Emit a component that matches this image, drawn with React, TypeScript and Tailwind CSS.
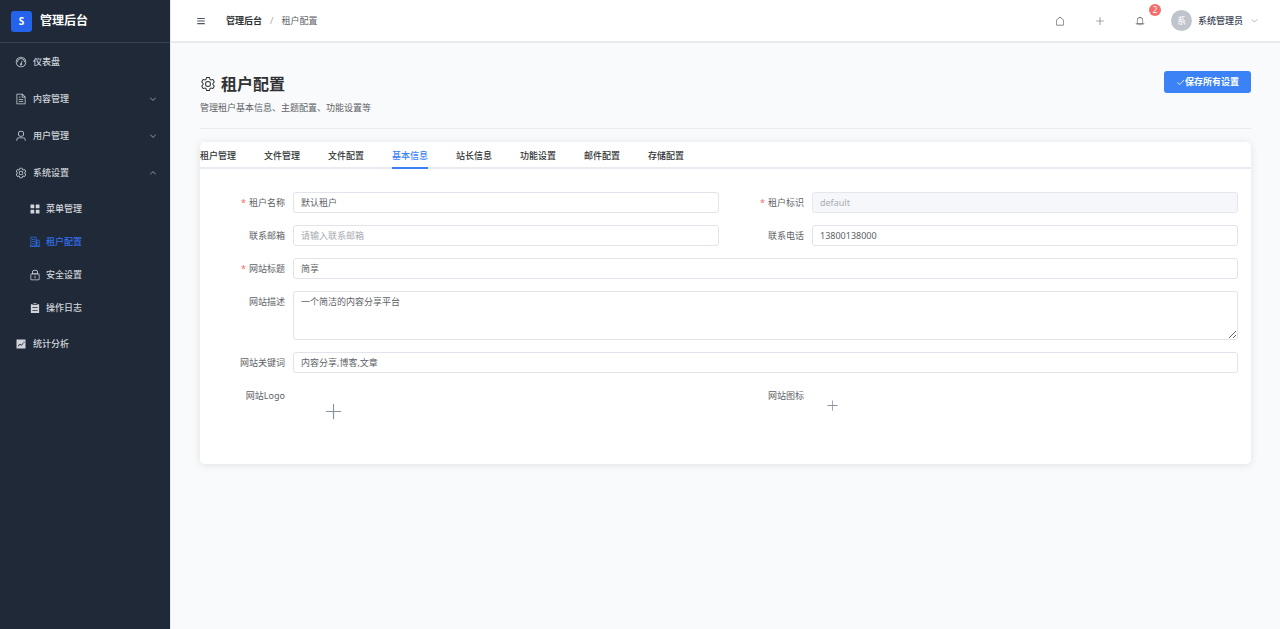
import { useState } from "react"
import type { ReactNode } from "react"
import clsx from "clsx"

const icons = {
  odometer:
    "M512 896a384 384 0 1 0 0-768 384 384 0 0 0 0 768zm0 64a448 448 0 1 1 0-896 448 448 0 0 1 0 896z M192 512a320 320 0 1 1 640 0 32 32 0 1 1-64 0 256 256 0 1 0-512 0 32 32 0 0 1-64 0z M570.432 627.84A96 96 0 1 1 509.568 608l60.992-187.776A32 32 0 1 1 631.424 440l-60.992 187.776zM502.08 734.464a32 32 0 1 0 19.84-60.928 32 32 0 0 0-19.84 60.928z",
  document:
    "M832 384H576V128H192v768h640V384zm-26.496-64L640 154.496V320h165.504zM160 64h480l256 256v608a32 32 0 0 1-32 32H160a32 32 0 0 1-32-32V96a32 32 0 0 1 32-32zm160 448h384v64H320v-64zm0-192h160v64H320v-64zm0 384h384v64H320v-64z",
  user: "M512 512a192 192 0 1 0 0-384 192 192 0 0 0 0 384zm0 64a256 256 0 1 1 0-512 256 256 0 0 1 0 512zm320 320v-96a96 96 0 0 0-96-96H288a96 96 0 0 0-96 96v96a32 32 0 1 1-64 0v-96a160 160 0 0 1 160-160h448a160 160 0 0 1 160 160v96a32 32 0 1 1-64 0z",
  setting:
    "M600.704 64a32 32 0 0 1 30.464 22.208l35.2 109.376c14.784 7.232 28.928 15.36 42.432 24.512l112.384-24.192a32 32 0 0 1 34.432 15.36L944.32 364.8a32 32 0 0 1-4.032 37.504l-77.12 85.12a357.12 357.12 0 0 1 0 49.024l77.12 85.248a32 32 0 0 1 4.032 37.504l-88.704 153.6a32 32 0 0 1-34.432 15.296L708.8 803.904c-13.44 9.088-27.648 17.28-42.368 24.512l-35.264 109.376A32 32 0 0 1 600.704 960H423.296a32 32 0 0 1-30.464-22.208L357.696 828.48a351.616 351.616 0 0 1-42.56-24.64l-112.32 24.256a32 32 0 0 1-34.432-15.36L79.68 659.2a32 32 0 0 1 4.032-37.504l77.12-85.248a357.12 357.12 0 0 1 0-48.896l-77.12-85.248A32 32 0 0 1 79.68 364.8l88.704-153.6a32 32 0 0 1 34.432-15.296l112.32 24.256c13.568-9.152 27.776-17.408 42.56-24.64l35.2-109.312A32 32 0 0 1 423.232 64H600.64zm-23.424 64H446.72l-36.352 113.088-24.512 11.968a294.113 294.113 0 0 0-34.816 20.096l-22.656 15.36-116.224-25.088-65.28 113.152 79.68 88.192-1.92 27.136a293.12 293.12 0 0 0 0 40.192l1.92 27.136-79.808 88.192 65.344 113.152 116.224-25.024 22.656 15.296a294.113 294.113 0 0 0 34.816 20.096l24.512 11.968L446.72 896h130.688l36.48-113.152 24.448-11.904a288.282 288.282 0 0 0 34.752-20.096l22.592-15.296 116.288 25.024 65.28-113.152-79.744-88.192 1.92-27.136a293.12 293.12 0 0 0 0-40.256l-1.92-27.136 79.808-88.128-65.344-113.152-116.288 24.96-22.592-15.232a287.616 287.616 0 0 0-34.752-20.096l-24.448-11.904L577.344 128zM512 320a192 192 0 1 1 0 384 192 192 0 0 1 0-384zm0 64a128 128 0 1 0 0 256 128 128 0 0 0 0-256z",
  menu: "M160 448a32 32 0 0 1-32-32V160.064a32 32 0 0 1 32-32h256a32 32 0 0 1 32 32V416a32 32 0 0 1-32 32H160zm448 0a32 32 0 0 1-32-32V160.064a32 32 0 0 1 32-32h255.936a32 32 0 0 1 32 32V416a32 32 0 0 1-32 32H608zM160 896a32 32 0 0 1-32-32V608a32 32 0 0 1 32-32h256a32 32 0 0 1 32 32v256a32 32 0 0 1-32 32H160zm448 0a32 32 0 0 1-32-32V608a32 32 0 0 1 32-32h255.936a32 32 0 0 1 32 32v256a32 32 0 0 1-32 32H608z",
  building:
    "M192 128v704h384V128H192zm-32-64h448a32 32 0 0 1 32 32v768a32 32 0 0 1-32 32H160a32 32 0 0 1-32-32V96a32 32 0 0 1 32-32z M256 256h256v64H256v-64zm0 192h256v64H256v-64zm0 192h256v64H256v-64zm384-128h128v64H640v-64zm0 128h128v64H640v-64zM64 832h896v64H64v-64z M640 384v448h192V384H640zm-32-64h256a32 32 0 0 1 32 32v512a32 32 0 0 1-32 32H608a32 32 0 0 1-32-32V352a32 32 0 0 1 32-32z",
  lock: "M224 448a32 32 0 0 0-32 32v384a32 32 0 0 0 32 32h576a32 32 0 0 0 32-32V480a32 32 0 0 0-32-32H224zm0-64h576a96 96 0 0 1 96 96v384a96 96 0 0 1-96 96H224a96 96 0 0 1-96-96V480a96 96 0 0 1 96-96z M512 544a32 32 0 0 1 32 32v192a32 32 0 1 1-64 0V576a32 32 0 0 1 32-32zm192-160v-64a192 192 0 1 0-384 0v64h384zM512 64a256 256 0 0 1 256 256v128H256V320A256 256 0 0 1 512 64z",
  list: "M704 192h160v736H160V192h160v64h384v-64zM288 512h448v-64H288v64zm0 256h448v-64H288v64zm96-576V96h256v96H384z",
  trend:
    "M128 896V128h768v768H128zm291.712-327.296 128 102.4 180.16-201.792-47.744-42.624-139.84 156.608-128-102.4-180.16 201.792 47.744 42.624 139.84-156.608zM816 352a48 48 0 1 0-96 0 48 48 0 0 0 96 0z",
  arrowDown:
    "M831.872 340.864 512 652.672 192.128 340.864a30.592 30.592 0 0 0-42.752 0 29.12 29.12 0 0 0 0 41.6L489.664 714.24a32 32 0 0 0 44.672 0l340.288-331.712a29.12 29.12 0 0 0 0-41.728 30.592 30.592 0 0 0-42.752 0z",
  fold: "M896 192H128v110h768V192zm0 265H128v110h768V457zm0 265H128v110h768V722z",
  house:
    "M192 413.952V896h640V413.952L512 147.328 192 413.952zM139.52 374.4l352-293.312a32 32 0 0 1 40.96 0l352 293.312A32 32 0 0 1 896 398.976V928a32 32 0 0 1-32 32H160a32 32 0 0 1-32-32V398.976a32 32 0 0 1 11.52-24.576z",
  plus: "M480 480V128a32 32 0 0 1 64 0v352h352a32 32 0 1 1 0 64H544v352a32 32 0 1 1-64 0V544H128a32 32 0 0 1 0-64h352z",
  bell: "M512 64a64 64 0 0 1 64 64v64H448v-64a64 64 0 0 1 64-64z M256 768h512V448a256 256 0 1 0-512 0v320zm256-640a320 320 0 0 1 320 320v384H192V448a320 320 0 0 1 320-320z M96 768h832q32 0 32 32t-32 32H96q-32 0-32-32t32-32zm352 128h128a64 64 0 0 1-128 0z",
  check:
    "M406.656 706.944 195.84 496.256a32 32 0 1 0-45.248 45.248l256 256 512-512a32 32 0 0 0-45.248-45.248L406.592 706.944z",
}

type IconName = keyof typeof icons

function Icon({ name, className }: { name: IconName; className?: string }) {
  return (
    <svg
      viewBox="0 0 1024 1024"
      fill="currentColor"
      aria-hidden="true"
      className={clsx("shrink-0", className)}
    >
      {icons[name].split(" M").map((d, i) => (
        <path key={i} d={i === 0 ? d : "M" + d} />
      ))}
    </svg>
  )
}

type MenuItem = { label: string; icon: IconName; children?: MenuItem[]; open?: boolean }

const menu: MenuItem[] = [
  { label: "仪表盘", icon: "odometer" },
  { label: "内容管理", icon: "document", children: [] },
  { label: "用户管理", icon: "user", children: [] },
  {
    label: "系统设置",
    icon: "setting",
    open: true,
    children: [
      { label: "菜单管理", icon: "menu" },
      { label: "租户配置", icon: "building" },
      { label: "安全设置", icon: "lock" },
      { label: "操作日志", icon: "list" },
    ],
  },
  { label: "统计分析", icon: "trend" },
]

const tabs = [
  "租户管理",
  "文件管理",
  "文件配置",
  "基本信息",
  "站长信息",
  "功能设置",
  "邮件配置",
  "存储配置",
]

function Sidebar() {
  return (
    <aside className="flex w-[171px] shrink-0 flex-col border-r border-[#e6e8eb] bg-[#1f2937] text-[#d1d5db]">
      <div className="flex h-[43px] items-center gap-2 border-b border-[#374151] pl-[11px] text-white">
        <span className="flex size-[21px] items-center justify-center rounded-[3px] bg-[#2563eb] text-[10px] font-bold">
          S
        </span>
        <span className="text-[12px] font-bold">管理后台</span>
      </div>
      <nav className="font-medium">
        {menu.map((item) => (
          <div key={item.label}>
            {item.children ? (
              <button
                type="button"
                aria-expanded={!!item.open}
                className="flex h-[37px] w-full items-center gap-[6px] pr-[13px] pl-[15px]"
              >
                <Icon name={item.icon} className="size-3" />
                <span>{item.label}</span>
                <Icon
                  name="arrowDown"
                  className={clsx("ml-auto size-2", item.open && "rotate-180")}
                />
              </button>
            ) : (
              <a href="#" className="flex h-[37px] items-center gap-[6px] pl-[15px]">
                <Icon name={item.icon} className="size-3" />
                <span>{item.label}</span>
              </a>
            )}
            {item.open && (
              <div className="py-px">
                {item.children?.map((child) => (
                  <a
                    key={child.label}
                    href="#"
                    className={clsx(
                      "flex h-[33px] items-center gap-[5px] pl-[29px]",
                      child.label === "租户配置" && "text-[#3370f0]"
                    )}
                  >
                    <Icon name={child.icon} className="size-3" />
                    <span>{child.label}</span>
                  </a>
                ))}
              </div>
            )}
          </div>
        ))}
      </nav>
    </aside>
  )
}

function Header() {
  return (
    <header className="z-10 flex h-[42px] shrink-0 items-center border-b border-[#e9ebee] bg-white pr-[21px] pl-[25px] shadow-[0_1px_1px_rgba(0,0,0,0.06)]">
      <button type="button" aria-label="折叠菜单" className="text-[#4b5563]">
        <Icon name="fold" className="size-[10px]" />
      </button>
      <nav aria-label="面包屑" className="ml-5 flex items-center gap-2">
        <a href="#" className="font-bold text-[#303133]">
          管理后台
        </a>
        <span className="text-[#a8abb2]">/</span>
        <span className="text-[#606266]">租户配置</span>
      </nav>
      <div className="ml-auto flex items-center text-[#606266]">
        <button type="button" aria-label="首页" className="flex w-10 justify-center">
          <Icon name="house" className="size-[10px]" />
        </button>
        <button type="button" aria-label="新建" className="flex w-10 justify-center">
          <Icon name="plus" className="size-[10px]" />
        </button>
        <button type="button" aria-label="通知" className="relative flex w-10 justify-center">
          <Icon name="bell" className="size-[10px]" />
          <span className="absolute -top-3 -right-px flex size-3 items-center justify-center rounded-full bg-[#f56c6c] text-[8px] text-white">
            2
          </span>
        </button>
        <button type="button" className="ml-[11px] flex items-center gap-[6px]">
          <span className="flex size-[21px] items-center justify-center rounded-full bg-[#c0c4cc] text-white">
            系
          </span>
          <span className="font-medium text-[#374151]">系统管理员</span>
          <Icon name="arrowDown" className="ml-px size-[9px] text-[#909399]" />
        </button>
      </div>
    </header>
  )
}

type FieldProps = {
  id: string
  label: string
  required?: boolean
  className?: string
  children: ReactNode
}

function Field({ id, label, required, className, children }: FieldProps) {
  return (
    <div className={clsx("flex items-start", className)}>
      <label
        htmlFor={id}
        className="flex h-[21px] w-20 shrink-0 items-center justify-end gap-[3px] pr-2 text-[#606266]"
      >
        {required && <span className="text-[#f56c6c]">*</span>}
        {label}
      </label>
      {children}
    </div>
  )
}

const inputClass =
  "h-[21px] w-full min-w-0 rounded-[3px] border border-[#e1e4ea] bg-white px-[7px] text-[#606266] outline-none placeholder:text-[#a8abb2] disabled:border-[#e4e7ed] disabled:bg-[#f5f7fa] disabled:text-[#a8abb2]"

function BasicForm() {
  return (
    <form className="grid grid-cols-2 gap-x-[13px] gap-y-3 px-[13px] pt-[23px] pb-[26px]">
      <Field id="name" label="租户名称" required>
        <input id="name" className={inputClass} defaultValue="默认租户" />
      </Field>
      <Field id="code" label="租户标识" required>
        <input id="code" className={inputClass} defaultValue="default" disabled />
      </Field>
      <Field id="email" label="联系邮箱">
        <input id="email" className={inputClass} placeholder="请输入联系邮箱" />
      </Field>
      <Field id="phone" label="联系电话">
        <input id="phone" className={inputClass} defaultValue="13800138000" />
      </Field>
      <Field id="title" label="网站标题" required className="col-span-2">
        <input id="title" className={inputClass} defaultValue="简享" />
      </Field>
      <Field id="description" label="网站描述" className="col-span-2">
        <textarea
          id="description"
          className="h-[49px] w-full resize-y rounded-[3px] border border-[#e1e4ea] bg-white px-[7px] py-[3px] text-[#606266] outline-none"
          defaultValue="一个简洁的内容分享平台"
        />
      </Field>
      <Field id="keywords" label="网站关键词" className="col-span-2">
        <input id="keywords" className={inputClass} defaultValue="内容分享,博客,文章" />
      </Field>
      <Field id="logo" label="网站Logo">
        <button
          id="logo"
          type="button"
          className="flex h-[53px] w-20 items-center justify-center text-[#8c939d]"
        >
          <Icon name="plus" className="size-[19px]" />
        </button>
      </Field>
      <Field id="favicon" label="网站图标">
        <button
          id="favicon"
          type="button"
          className="flex size-10 items-center justify-center text-[#8c939d]"
        >
          <Icon name="plus" className="size-[13px]" />
        </button>
      </Field>
    </form>
  )
}

export default function App() {
  const [active, setActive] = useState("基本信息")

  return (
    <div
      lang="zh-CN"
      className="flex min-h-screen bg-[#f8fafc] font-['Noto_Sans','Noto_Sans_CJK_SC',sans-serif] text-[9px] leading-[14px]"
    >
      <Sidebar />
      <div className="flex min-w-0 flex-1 flex-col">
        <Header />
        <main className="px-[29px] pt-[29px]">
          <div className="flex items-start justify-between border-b border-[#e9ebf0] pb-[13px]">
            <div>
              <h1 className="flex items-center gap-[5px] text-[16px] leading-[26px] font-bold text-[#303133]">
                <Icon name="setting" className="size-4" />
                租户配置
              </h1>
              <p className="mt-1 text-[#606266]">管理租户基本信息、主题配置、功能设置等</p>
            </div>
            <button
              type="button"
              className="flex h-[22px] items-center rounded-[3px] bg-[#3b82f6] px-3 font-bold text-white"
            >
              <Icon name="check" className="size-[9px]" />
              保存所有设置
            </button>
          </div>

          <section className="mt-[13px] rounded-[5px] bg-white shadow-[0_1px_8px_rgba(0,0,0,0.1)]">
            <div role="tablist" className="flex gap-7 border-b-2 border-[#e9ebf0]">
              {tabs.map((tab) => (
                <button
                  key={tab}
                  type="button"
                  role="tab"
                  aria-selected={tab === active}
                  onClick={() => setActive(tab)}
                  className={clsx(
                    "-mb-0.5 h-[27px] border-b-2 pt-0.5 font-medium",
                    tab === active
                      ? "border-[#3b82f6] text-[#3b82f6]"
                      : "border-transparent text-[#303133]"
                  )}
                >
                  {tab}
                </button>
              ))}
            </div>
            <BasicForm />
          </section>
        </main>
      </div>
    </div>
  )
}
